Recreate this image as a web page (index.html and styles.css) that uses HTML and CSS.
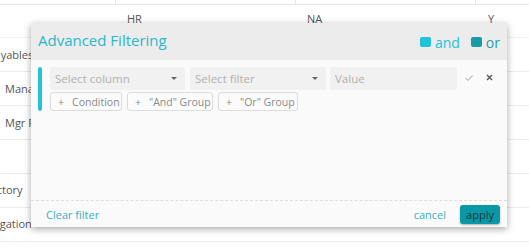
FILE: index.html
```html
<!DOCTYPE html>
<html>
<head>
<meta charset="utf-8">
<link rel="stylesheet" href="styles.css">
</head>
<body>
<div class="table">
  <div class="row top"><div class="c c1"></div><div class="c c2"></div><div class="c c3"></div><div class="c c4"></div></div>
  <div class="row head"><div class="c c1"></div><div class="c c2">HR</div><div class="c c3">NA</div><div class="c c4">Y</div></div>
  <div class="row"><div class="c c1"><span class="cut">Payables/AP</span></div><div class="c c2"></div><div class="c c3"></div><div class="c c4"></div></div>
  <div class="row"><div class="c c1"><span class="cut2">Manager</span></div><div class="c c2"></div><div class="c c3"></div><div class="c c4"></div></div>
  <div class="row"><div class="c c1"><span class="cut2">Mgr Review</span></div><div class="c c2"></div><div class="c c3"></div><div class="c c4"></div></div>
  <div class="row"><div class="c c1"></div><div class="c c2"></div><div class="c c3"></div><div class="c c4"></div></div>
  <div class="row"><div class="c c1"><span class="cut3">Factory</span></div><div class="c c2"></div><div class="c c3"></div><div class="c c4"></div></div>
  <div class="row"><div class="c c1"><span class="cut4">Navigation</span></div><div class="c c2"></div><div class="c c3"></div><div class="c c4"></div></div>
</div>

<div class="dialog">
  <div class="dlg-head">
    <div class="title">Advanced Filtering</div>
    <div class="legend">
      <span class="sq sq-and"></span><span class="lg-and">and</span>
      <span class="sq sq-or"></span><span class="lg-or">or</span>
    </div>
  </div>
  <div class="dlg-body">
    <div class="group">
      <div class="bar"></div>
      <div class="group-main">
        <div class="cond">
          <div class="field sel col"><span>Select column</span><span class="caret"></span></div>
          <div class="field sel filt"><span>Select filter</span><span class="caret"></span></div>
          <div class="field val"><span>Value</span></div>
          <span class="ico ok"><svg width="8" height="6" viewBox="0 0 8 6"><path d="M0.5 3.2 L2.8 5.3 L7.5 0.7" fill="none" stroke="#b8b8b8" stroke-width="1.1"/></svg></span>
          <span class="ico del"><svg width="7" height="7" viewBox="0 0 7 7"><path d="M1 1 L6 6 M6 1 L1 6" fill="none" stroke="#555" stroke-width="1.4"/></svg></span>
        </div>
        <div class="btns">
          <button class="btn b1"><span class="plus">+</span>Condition</button>
          <button class="btn b2"><span class="plus">+</span>"And" Group</button>
          <button class="btn b3"><span class="plus">+</span>"Or" Group</button>
        </div>
      </div>
    </div>
  </div>
  <div class="dlg-foot">
    <span class="clear">Clear filter</span>
    <div class="actions">
      <span class="cancel">cancel</span>
      <button class="apply">apply</button>
    </div>
  </div>
</div>
</body>
</html>
```
FILE: styles.css
```css
html, body {
  margin: 0;
  padding: 0;
  background: #ffffff;
  font-family: "Open Sans", "Noto Sans", sans-serif;
}
.table {
  width: 529px;
  overflow: hidden;
}
.row {
  display: flex;
  height: 33px;
  border-bottom: 1px solid #ececec;
  font-size: 11px;
  color: #555;
}
.row.top {
  height: 4px;
  border-bottom: 1px solid #e6e6e6;
}
.row.top .c { border-right: 1px solid #e6e6e6; }
.row.top .c4 { border-right: none; }
.row.head {
  height: 32px;
  border-bottom: 1px solid #f2f2f2;
}
.c {
  display: flex;
  align-items: center;
  overflow: hidden;
  white-space: nowrap;
}
.c1 { width: 115px; }
.c2 { width: 181px; padding-left: 12px; box-sizing: border-box; }
.c3 { width: 180px; padding-left: 11px; box-sizing: border-box; }
.c4 { width: 53px; padding-left: 12px; box-sizing: border-box; }
.head .c { align-items: flex-start; padding-top: 8px; line-height: 12px; }
.cut { margin-left: -12px; }
.cut2 { margin-left: 5px; }
.cut3 { margin-left: -15px; margin-top: -3px; }
.cut4 { margin-left: -23px; margin-top: -3px; }

.dialog {
  position: absolute;
  left: 31px;
  top: 23px;
  width: 476px;
  height: 204px;
  background: #fafafa;
  box-shadow: 0 2px 7px rgba(0,0,0,0.35);
  display: flex;
  flex-direction: column;
}
.dlg-head {
  height: 37px;
  background: #ececec;
  display: flex;
  align-items: center;
  justify-content: space-between;
  padding: 0 7px;
}
.title {
  color: #2bb7ca;
  font-size: 15px;
  margin-top: -4px;
}
.legend {
  display: flex;
  align-items: center;
  font-size: 14px;
  margin-top: 1px;
}
.sq {
  width: 11px;
  height: 10px;
  border-radius: 2px;
  display: inline-block;
  margin-right: 4px;
}
.sq-and { background: #22c3d9; }
.sq-or { background: #189aa7; margin-left: 11px; }
.lg-and { color: #22c3d9; }
.lg-or { color: #1a9fad; }

.dlg-body {
  flex: 1;
  padding: 7px 7px 0 7px;
}
.group {
  display: flex;
  gap: 8px;
}
.bar {
  width: 4px;
  height: 44px;
  background: #25c1d6;
  border-radius: 2px;
}
.group-main {
  display: flex;
  flex-direction: column;
  gap: 2px;
}
.cond {
  display: flex;
  align-items: center;
  height: 23px;
}
.field {
  height: 23px;
  background: #f1f1f1;
  display: flex;
  align-items: center;
  justify-content: space-between;
  padding: 0 8px 0 5px;
  box-sizing: border-box;
  font-size: 11.5px;
  color: #b0b0b0;
  border-radius: 2px;
}
.col { width: 135px; margin-right: 5px; }
.filt { width: 136px; margin-right: 4px; }
.val { width: 127px; }
.caret {
  width: 0;
  height: 0;
  border-left: 3px solid transparent;
  border-right: 3px solid transparent;
  border-top: 3px solid #666;
}
.ico {
  display: flex;
  align-items: center;
  margin-top: -2px;
}
.ok { margin-left: 8px; }
.del { margin-left: 13px; }
.btns {
  display: flex;
  gap: 5px;
}
.btn {
  height: 19px;
  border: 1px solid #dcdcdc;
  background: #fbfbfb;
  border-radius: 3px;
  font-family: "Open Sans", "Noto Sans", sans-serif;
  font-size: 10.5px;
  color: #8a8a8a;
  padding: 0 0 0 7px;
  display: flex;
  align-items: center;
  white-space: nowrap;
  box-sizing: border-box;
}
.b1 { width: 72px; }
.b2 { width: 86px; }
.b3 { width: 80px; }
.plus {
  margin-right: 8px;
}
.dlg-foot {
  height: 26px;
  border-top: 1px dashed #dedede;
  display: flex;
  align-items: center;
  justify-content: space-between;
  padding: 0 7px 0 15px;
}
.clear {
  font-size: 11px;
  color: #3aafc0;
}
.actions {
  display: flex;
  align-items: center;
}
.cancel {
  font-size: 11px;
  color: #3aafc0;
  margin-right: 14px;
}
.apply {
  width: 40px;
  height: 19px;
  background: #0b98a6;
  border: none;
  border-radius: 3px;
  color: #173a40;
  font-family: "Open Sans", "Noto Sans", sans-serif;
  font-size: 11px;
  padding: 0;
  box-shadow: 0 1px 2px rgba(0,0,0,0.3);
}
```
